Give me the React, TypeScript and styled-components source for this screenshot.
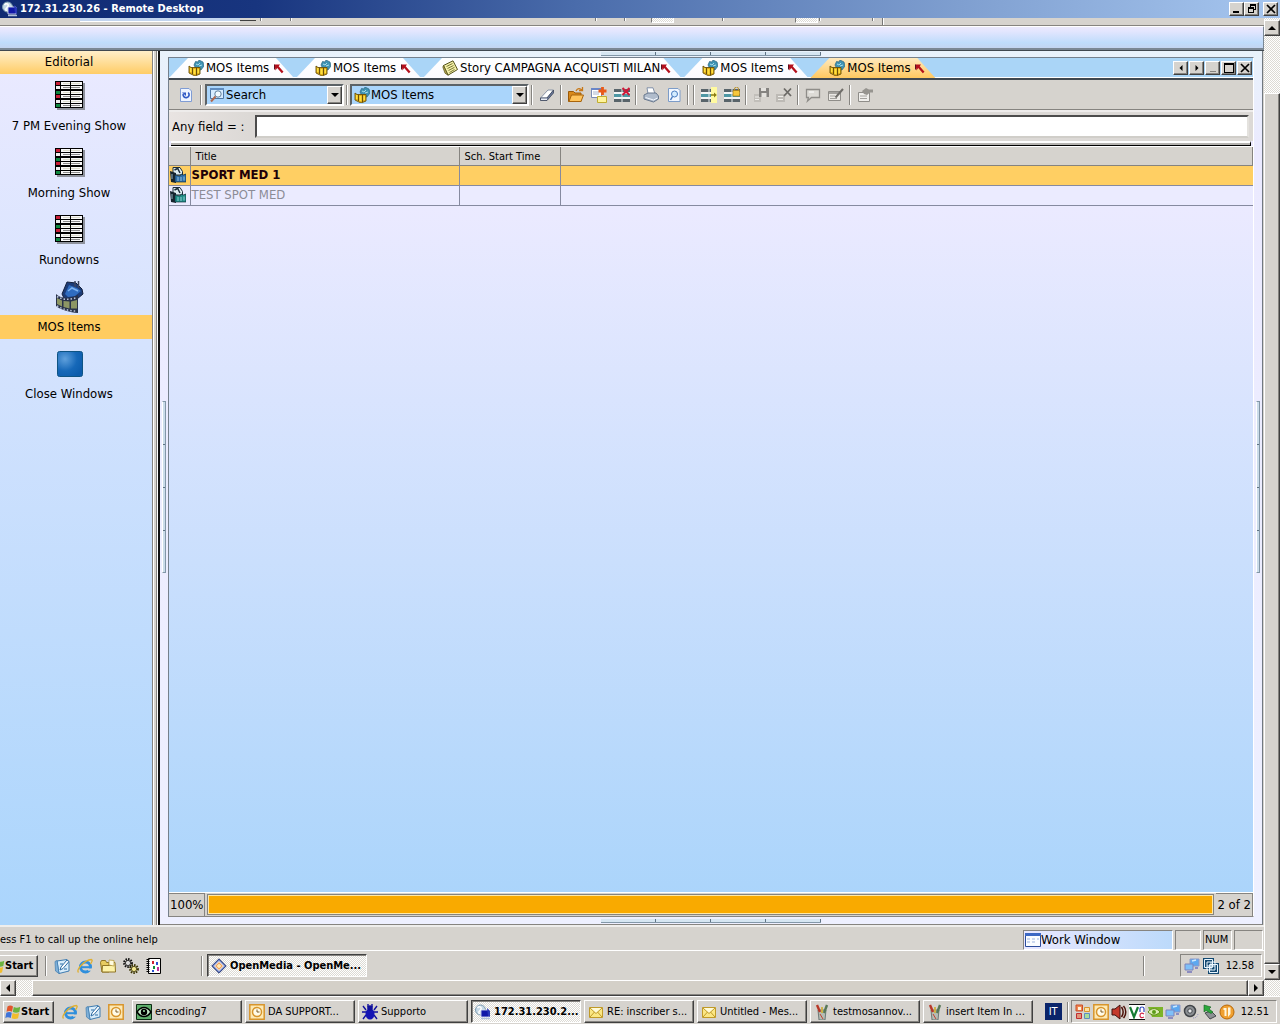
import React from "react";
import styled, { createGlobalStyle, css } from "styled-components";

const face = "#d6d3ce";
const uiFont = '"DejaVu Sans Condensed", "DejaVu Sans", Verdana, sans-serif';

const GlobalStyle = createGlobalStyle`
  * { box-sizing: border-box; }
  html, body { margin: 0; background: ${face}; }
  button, input, select, table { font: inherit; color: inherit; }
  button { padding: 0; margin: 0; cursor: default; }
`;

const raised = css`
  border: 1px solid;
  border-color: #fff #404040 #404040 #fff;
  box-shadow: inset -1px -1px 0 #868480;
`;
const sunken = css`
  border: 1px solid;
  border-color: #868480 #fff #fff #868480;
`;
const dither = css`
  background: repeating-conic-gradient(#fff 0 25%, #dcdad4 0 50%) 0 0 / 2px 2px;
`;

/* ---------- frame ---------- */
const Screen = styled.div`
  display: flex;
  flex-direction: column;
  min-height: 100vh;
  overflow: hidden;
  background: ${face};
  font-family: ${uiFont};
  font-size: 11px;
  line-height: 14px;
  color: #000;
`;
const TitleBar = styled.header`
  display: flex;
  align-items: center;
  height: 18px;
  padding: 0 2px;
  gap: 2px;
  color: #fff;
  background: linear-gradient(90deg, #0f2a72 0%, #18357f 20%, #4a6cab 45%, #7f9fd0 75%, #a6c6ef 100%);
`;
const TitleText = styled.h1`
  flex: 1;
  margin: 0;
  font-size: 11px;
  font-weight: bold;
`;
const BoxButton = styled.button<{ $gap?: number }>`
  display: flex;
  align-items: center;
  justify-content: center;
  flex: none;
  width: 15px;
  height: 14px;
  margin-left: ${(p) => p.$gap ?? 0}px;
  background: ${face};
  ${raised}
`;
const WinButtons = styled.div`
  display: flex;
`;
const Desk = styled.div`
  display: flex;
  flex: 1;
`;
const Remote = styled.div`
  display: flex;
  flex-direction: column;
  flex: 1;
  min-width: 0;
`;
const VScroll = styled.div`
  display: flex;
  flex-direction: column;
  flex: none;
  width: 16px;
  padding-top: 2px;
  ${dither}
`;
const HScroll = styled.div`
  display: flex;
  height: 16px;
  padding-right: 16px;
  ${dither}
`;
const ScrollButton = styled.button`
  display: flex;
  align-items: center;
  justify-content: center;
  flex: none;
  width: 16px;
  height: 16px;
  background: ${face};
  ${raised}
`;
const VThumb = styled.div`
  flex: 1;
  margin-top: 57px;
  background: ${face};
  ${raised}
`;
const HThumb = styled.div`
  flex: 1;
  margin-left: 16px;
  background: #d4d0c8;
  ${raised}
`;

/* ---------- remote application ---------- */
const Remnant = styled.div`
  display: flex;
  height: 8px;
  border-bottom: 1px solid #868480;
  background: ${face};
`;
const RemnantField = styled.span`
  width: 160px;
  height: 4px;
  margin-left: 80px;
  border-bottom: 1px solid #fff;
  background: #c2d4ee;
`;
const RemnantDrop = styled.span`
  width: 16px;
  height: 3px;
  border-bottom: 1px solid #404040;
`;
const Tick = styled.span<{ $before: number; $tall?: boolean }>`
  width: 2px;
  height: ${(p) => (p.$tall ? 7 : 3)}px;
  margin-left: ${(p) => p.$before}px;
  border-left: 1px solid #777;
  border-right: 1px solid #fff;
`;
const Pressed = styled.span<{ $before: number }>`
  width: 23px;
  height: 5px;
  margin-left: ${(p) => p.$before}px;
  border: 1px solid #fff;
  border-left-color: #777;
  border-top: 0;
  ${dither}
`;
const BlueBar = styled.div`
  height: 24px;
  border-top: 1px solid #fff;
  border-bottom: 2px solid #7b8894;
  border-right: 1px solid #7b8894;
  background: linear-gradient(#ebe9fe 0, #e3e6fe 20%, #bfdcfb 75%, #c3d4f0 100%);
`;
const Work = styled.div`
  display: flex;
  flex: 1;
  min-height: 0;
  padding-right: 1px;
  border-top: 1px solid #404850;
`;
const Sidebar = styled.nav`
  flex: none;
  width: 153px;
  border-right: 1px solid #868480;
  background: linear-gradient(#ebeaff, #aad5fc);
  font-size: 13px;
  line-height: 16px;
`;
const SideTitle = styled.h2`
  height: 23px;
  margin: 0;
  padding: 3px 14px 0 0;
  font-size: 13px;
  font-weight: normal;
  text-align: center;
  background: linear-gradient(#ffefc9, #ffcc66);
`;
const SideItem = styled.button`
  display: block;
  width: 100%;
  height: 67px;
  padding: 6px 0 3px;
  border: 0;
  background: none;
  text-align: center;
`;
const SideIcon = styled.span`
  display: flex;
  height: 31px;
  margin-bottom: 3px;
  padding-right: 12px;
  align-items: center;
  justify-content: center;
`;
const SideLabel = styled.span<{ $on?: boolean }>`
  display: block;
  height: 24px;
  padding: 4px 14px 0 0;
  background: ${(p) => (p.$on ? "#ffcc60" : "none")};
`;
const Splitter = styled.div`
  flex: none;
  width: 7px;
  border-left: 1px solid #fff;
  border-right: 2px solid #111;
  background: linear-gradient(90deg, ${face} 2px, #868480 2px 3px, #fff 3px);
`;
const Frame = styled.main`
  display: grid;
  flex: 1;
  min-width: 0;
  grid-template: 6px minmax(0, 1fr) 7px / 8px minmax(0, 1fr) 8px;
  border-right: 1px solid #707880;
  border-bottom: 1px solid #868480;
  background: linear-gradient(#e9f2fb, #ebeaff 12%, #eef0ff);
`;
const HGrip = styled.div`
  grid-column: 1 / -1;
  justify-self: center;
  align-self: center;
  width: 220px;
  height: 4px;
  border-bottom: 1px solid #8297a8;
  background: repeating-linear-gradient(90deg, #d6e6f2 0 54px, #5f7384 54px 55px);
`;
const VGrip = styled.div`
  justify-self: center;
  align-self: center;
  width: 4px;
  height: 172px;
  border: 1px solid #8297a8;
  border-left-color: #fff;
  background: repeating-linear-gradient(#cbdcea 0 42px, #5f7384 42px 43px);
`;
const Child = styled.section`
  display: flex;
  flex-direction: column;
  min-width: 0;
  border: 1px solid #75808c;
  border-right-color: #fff;
  border-bottom-color: #868480;
  background: linear-gradient(#ebeaff 150px, #a9d4fb);
`;
const TabStrip = styled.div`
  display: flex;
  height: 22px;
  background: #aad5f7;
  border-bottom: 2px solid #404850;
`;
const Tabs = styled.div`
  display: flex;
  flex: 1;
  border-bottom: 1px solid #fff;
`;
const Tab = styled.button<{ $on?: boolean }>`
  display: flex;
  align-items: center;
  height: 20px;
  padding: 0 12px 0 19px;
  border: 0;
  font-size: 13px;
  line-height: 16px;
  white-space: nowrap;
  background: ${(p) => (p.$on ? "linear-gradient(#ffe9bd, #ffc860)" : "linear-gradient(#ffffff, #fbfbff)")};
  clip-path: polygon(19px 0, calc(100% - 20px) 0, calc(100% - 2px) 100%, 0 100%);
`;
const TabText = styled.span`
  min-width: 67px;
  margin: 0 1px 0 2px;
  text-align: left;
`;
const TabTools = styled.div`
  display: flex;
  align-items: center;
  gap: 1px;
  padding-right: 1px;
  border-bottom: 1px solid #fff;
`;
const Toolbar = styled.div`
  display: flex;
  align-items: center;
  height: 30px;
  padding-left: 5px;
  border-bottom: 1px solid #868480;
  background: ${face};
`;
const ToolButton = styled.button`
  display: flex;
  align-items: center;
  justify-content: center;
  flex: none;
  width: 23px;
  height: 22px;
  border: 0;
  background: none;
`;
const Sep = styled.span<{ $h?: number; $m?: number }>`
  flex: none;
  width: 2px;
  height: ${(p) => p.$h ?? 20}px;
  margin: 0 ${(p) => p.$m ?? 2}px;
  border-left: 1px solid #868480;
  border-right: 1px solid #fff;
`;
const Combo = styled.span<{ $w: number }>`
  display: flex;
  align-items: center;
  flex: none;
  width: ${(p) => p.$w}px;
  height: 22px;
  padding-left: 2px;
  border: 2px solid;
  border-color: #5c6266 #fff #fff #5c6266;
  background: #aad5fb;
  font-size: 13px;
`;
const ComboSelect = styled.select`
  appearance: none;
  flex: 1;
  min-width: 0;
  height: 18px;
  margin-right: -15px;
  padding: 0 16px 0 1px;
  border: 0;
  outline: 0;
  background: transparent;
`;
const ComboArrow = styled.span`
  display: flex;
  align-items: center;
  justify-content: center;
  flex: none;
  width: 15px;
  height: 18px;
  background: ${face};
  pointer-events: none;
  ${raised}
`;
const FieldRow = styled.div`
  display: flex;
  align-items: center;
  height: 31px;
  padding: 0 4px 0 3px;
  gap: 11px;
  border-top: 2px solid #eeeceb;
  background: linear-gradient(90deg, #e9e4e2, #dcd9d6 80px);
  font-size: 13px;
`;
const FieldInput = styled.input`
  flex: 1;
  min-width: 0;
  height: 23px;
  padding: 0 4px;
  border: 2px solid;
  border-color: #4c4c4c #e4e2de #d0cec9 #4c4c4c;
  outline: 0;
  background: #fff;
`;
const Divider = styled.div`
  height: 5px;
  margin: 0 2px;
  border-top: 2px solid #fff;
  border-bottom: 1px solid #000;
  border-right: 1px solid #000;
  background: #b5b3b0;
`;
const Sheet = styled.div`
  display: flex;
  flex: 1;
  flex-direction: column;
  border-top: 1px solid #fff;
`;
const Grid = styled.table`
  width: 100%;
  border-collapse: collapse;
  table-layout: fixed;
`;
const HeadCell = styled.th`
  height: 18px;
  padding: 2px 0 0 5px;
  border-right: 1px solid #868480;
  border-bottom: 1px solid #868480;
  background: ${face};
  font-weight: normal;
  text-align: left;
`;
const Row = styled.tr<{ $on?: boolean }>`
  background: ${(p) => (p.$on ? "#ffcf63" : "#ebebff")};
  color: ${(p) => (p.$on ? "#200008" : "#8c8c96")};
  font-size: 13px;
  line-height: 16px;
  font-weight: ${(p) => (p.$on ? "bold" : "normal")};
`;
const Cell = styled.td`
  height: 20px;
  padding: 0 0 0 1px;
  border-right: 1px solid #868aa0;
  border-bottom: 1px solid #868aa0;
  &:last-child { border-right: 0; }
  svg { display: block; }
`;
const Footer = styled.div`
  display: flex;
  height: 24px;
  border-top: 1px solid #fff;
  background: ${face};
  font-size: 13px;
  line-height: 16px;
`;
const FooterText = styled.span`
  padding: 3px 1px 0;
  border-top: 1px solid #868480;
  border-right: 1px solid #868480;
`;
const Progress = styled.progress`
  appearance: none;
  flex: 1;
  min-width: 0;
  height: 21px;
  margin: 1px 2px 0;
  border: 1px solid #868480;
  background: #ffe080;
  &::-webkit-progress-bar { background: #ffe9a8; padding: 1px; }
  &::-webkit-progress-value { background: #f9aa00; }
`;
const StatusBar = styled.footer`
  display: flex;
  align-items: center;
  height: 26px;
  padding: 3px 1px 1px 0;
  gap: 2px;
  border-top: 2px solid #efeeec;
  border-bottom: 1px solid #fff;
  white-space: nowrap;
`;
const StatusText = styled.span`
  flex: 1;
`;
const StatusCell = styled.span<{ $w: number; $blue?: boolean }>`
  display: flex;
  align-items: center;
  flex: none;
  width: ${(p) => p.$w}px;
  height: 20px;
  padding-left: 1px;
  ${sunken}
  ${(p) =>
    p.$blue &&
    css`
      font-size: 13px;
      background: linear-gradient(90deg, #e9e8ff, #bcdafb);
    `}
`;

/* ---------- taskbars ---------- */
const RemoteBar = styled.div`
  display: flex;
  align-items: center;
  height: 29px;
  padding-right: 2px;
  overflow: hidden;
`;
const LocalBar = styled.div`
  display: flex;
  align-items: center;
  height: 28px;
  padding: 2px 3px 0;
  border-top: 1px solid #fff;
  box-shadow: inset 0 1px 0 ${face};
`;
const StartButton = styled.button<{ $cut?: boolean }>`
  display: flex;
  align-items: center;
  flex: none;
  width: 51px;
  height: 22px;
  margin-left: ${(p) => (p.$cut ? -13 : 0)}px;
  padding: 0 1px;
  background: ${face};
  font-weight: bold;
  ${raised}
`;
const Quick = styled.div<{ $left: number; $right: number }>`
  display: flex;
  flex: none;
  gap: 7px;
  padding: 0 ${(p) => p.$right}px 0 ${(p) => p.$left}px;
`;
const QuickButton = styled.button`
  display: flex;
  width: 16px;
  height: 16px;
  border: 0;
  background: none;
`;
const Tasks = styled.div`
  display: flex;
  flex: 1;
  min-width: 0;
  gap: 3px;
`;
const Task = styled.button<{ $on?: boolean; $w?: number }>`
  display: flex;
  align-items: center;
  flex: 0 1 ${(p) => p.$w ?? 110}px;
  min-width: 0;
  height: 23px;
  padding: 0 3px;
  gap: 3px;
  background: ${face};
  white-space: nowrap;
  ${raised}
  ${(p) =>
    p.$on &&
    css`
      ${dither}
      border-color: #404040 #fff #fff #404040;
      box-shadow: inset 1px 1px 0 #868480;
      font-weight: bold;
    `}
  svg { flex: none; }
`;
const Lang = styled.span`
  flex: none;
  width: 17px;
  height: 17px;
  margin-right: 3px;
  line-height: 17px;
  text-align: center;
  color: #fff;
  background: #0a246a;
`;
const Tray = styled.div<{ $gap: number }>`
  display: flex;
  align-items: center;
  flex: none;
  height: 23px;
  padding: 0 7px 0 3px;
  gap: ${(p) => p.$gap}px;
  ${sunken}
`;
const Clock = styled.time`
  margin-left: 4px;
`;

/* ---------- icons ---------- */
const Svg = ({ s = 16, children }: { s?: number; children: React.ReactNode }) => (
  <svg width={s} height={s} viewBox="0 0 16 16" aria-hidden="true">
    {children}
  </svg>
);

const Arrow = ({ d, small }: { d: "up" | "down" | "left" | "right"; small?: boolean }) => {
  const path = {
    up: "M0 6L4 2L8 6Z",
    down: "M0 2L4 6L8 2Z",
    left: "M6 0L2 4L6 8Z",
    right: "M2 0L6 4L2 8Z",
  }[d];
  const size = small ? 6 : 8;
  return (
    <svg width={size} height={size} viewBox="0 0 8 8" aria-hidden="true">
      <path d={path} fill="#000" />
    </svg>
  );
};
const Glyph = ({ k }: { k: "min" | "dimmin" | "max" | "restore" | "close" }) => (
  <svg width="10" height="10" viewBox="0 0 10 10" aria-hidden="true" shapeRendering="crispEdges">
    {k === "min" && <path d="M1 7h6v2H1z" />}
    {k === "dimmin" && <path d="M2 8h6v1H2z" fill="#868480" />}
    {k === "max" && <path d="M0 0h10v10H0zM1 2v7h8V2z" fillRule="evenodd" />}
    {k === "restore" && (
      <path d="M3 0h6v6H7V5h1V2H4v1H3zM1 3h6v6H1zM2 5v3h4V5z" fillRule="evenodd" />
    )}
    {k === "close" && (
      <path d="M1 1L9 9M9 1L1 9" stroke="#000" strokeWidth="1.7" shapeRendering="auto" />
    )}
  </svg>
);
const RdpIcon = () => (
  <Svg>
    <circle cx="5.500" cy="6" r="5" fill="#c4d8e6" stroke="#7d9bb0" />
    <path d="M2.500 4c2-3 5 0 3 2s-2 2-1 4" fill="none" stroke="#fff" strokeWidth="1.500" />
    <path d="M6 6h8v7H6z" fill="#1018a8" stroke="#dfe6f5" strokeWidth=".8" />
    <path d="M6 14.500h9" stroke="#aebfd8" strokeWidth="1.500" />
    <path d="M12 4l3 3v6l-2-1z" fill="#2838b8" />
  </Svg>
);
const MosIcon = () => (
  <Svg>
    <path d="M6 5l1.500-3.500L10 2l1-2 4 2 1 4-3 4-5-1z" fill="#3f93b4" stroke="#2b6480" strokeWidth=".7" />
    <path d="M8 4l2 1 2-2M11 6l3-1" stroke="#a6dcea" fill="none" />
    <path d="M1 6l2 1.500h9L12 14l-5 2-6-3z" fill="#e0ae18" stroke="#6a5008" strokeWidth=".9" />
    <path d="M4.500 8v6M8.500 8v7" stroke="#6a5008" />
    <path d="M2 8h1.500v4H2zM5.500 9h2v5h-2zM9.500 9H11v4H9.500z" fill="#ffe040" />
  </Svg>
);
const StoryIcon = () => (
  <Svg>
    <path d="M1.500 5.500L11 .8L15.500 9.500L6 15.200z" fill="#f4f0a8" stroke="#53521c" />
    <path d="M1.500 5.500L6 15.200l-3-2L.8 7z" fill="#b9a850" stroke="#53521c" strokeWidth=".7" />
    <path d="M4.500 6.500l6-3M5.500 8.500l6-3M6.500 10.500l6-3.200M7.500 12.500l5-3" stroke="#6b6a2a" strokeWidth=".9" />
  </Svg>
);
const PinIcon = () => (
  <svg width="10" height="11" viewBox="0 0 10 11" aria-hidden="true">
    <path d="M.5 1.500h5.500L4.700 3.200L9.500 8.800L7.800 10.300L3.200 5L1.500 7.500z" fill="#b4101c" />
    <path d="M.5 1.500v5" stroke="#5c1020" />
  </svg>
);
const RefreshIcon = () => (
  <Svg>
    <path d="M2.500 1.500h8.500l2.500 2.500v10.500h-11z" fill="#eef4ff" stroke="#7f9cd4" />
    <path d="M5.200 7a3 3 0 1 0 5 -1.500" fill="none" stroke="#2f58c4" strokeWidth="1.700" />
    <path d="M4 5.500h4V9z" fill="#2f58c4" />
  </Svg>
);
const SearchIcon = () => (
  <Svg>
    <path d="M1.500 1.500h13v10h-13z" fill="#d6ecff" stroke="#4f78a4" />
    <path d="M1 1h14v2H1z" fill="#5f8cc0" />
    <circle cx="9" cy="7" r="3.200" fill="#f2fbff" stroke="#5f7f9c" />
    <path d="M6.500 9.500L2 14.500" stroke="#b06a50" strokeWidth="2" />
  </Svg>
);
const EraserIcon = () => (
  <Svg>
    <path d="M1.500 11L9 3h5.500L8 11z" fill="#fff" stroke="#8a94a6" />
    <path d="M1.500 11v2.500H8L14.500 6V3L8 11z" fill="#6c7a9a" stroke="#3c465c" strokeWidth=".8" />
    <path d="M2 11.500h6v1.500H2z" fill="#e8ecf4" />
  </Svg>
);
const FolderIcon = () => (
  <Svg>
    <path d="M.5 4.500h5L7 6h6v8.500H.5z" fill="#d98a1c" stroke="#9c5a08" />
    <path d="M1 14.500L3.500 8h12L13 14.500z" fill="#ffc45c" stroke="#a8640c" />
    <path d="M8 4c1.500-3 4-3 6-1M14.500 0v3.500H11" fill="none" stroke="#c87818" strokeWidth="1.300" />
  </Svg>
);
const NewItemIcon = () => (
  <Svg>
    <path d="M.5 1.500h10v9H.5z" fill="#fff" stroke="#7c8cb4" />
    <path d="M0 1h11v2H0z" fill="#6a86c8" />
    <path d="M2 5h6M2 7h6" stroke="#a8b4cc" />
    <path d="M6.500 9.500h9v6h-9z" fill="#fff49a" stroke="#c0ac30" />
    <path d="M11.500 0v8M7.500 4h8" stroke="#ea5a18" strokeWidth="2.800" />
  </Svg>
);
const GridBase = () => (
  <>
    <path d="M0 2h16v13H0z" fill="#f4f6f6" />
    <path d="M0 2h16v3H0zM0 12h16v3H0z" fill="#59646a" />
    <path d="M0 7h16v3H0z" fill="#4f98a4" />
    <path d="M8 2v13" stroke="#e8eeee" />
  </>
);
const DeleteRowIcon = () => (
  <Svg>
    <GridBase />
    <path d="M8.500 1l7 7M15.500 1l-7 7" stroke="#d01838" strokeWidth="2" />
  </Svg>
);
const LockRowIcon = () => (
  <Svg>
    <GridBase />
    <path d="M10.500 4V2a2 2 0 0 1 4 0v2" fill="none" stroke="#b8902c" />
    <path d="M9 3.500h6.500V9H9z" fill="#f6c83c" stroke="#a87c10" strokeWidth=".7" />
  </Svg>
);
const InsertRowIcon = () => (
  <Svg>
    <GridBase />
    <path d="M10 0h6v16h-6z" fill="#fffaa0" />
    <path d="M10 8h4" stroke="#8a7c10" strokeWidth="1.500" />
    <path d="M13 5.500L15.800 8L13 10.500z" fill="#8a7c10" />
  </Svg>
);
const PrintIcon = () => (
  <Svg>
    <path d="M4 .8h6l2 6H5z" fill="#fff" stroke="#8090a8" />
    <path d="M1 8l4-2h8l2.500 3v3l-5 3L1 12z" fill="#b0bccc" stroke="#68788e" />
    <path d="M2.500 10.500l8 2.500 4-2" fill="none" stroke="#f4f8ff" />
  </Svg>
);
const PreviewIcon = () => (
  <Svg>
    <path d="M2.500 1.500h9.500l2 2v11H2.500z" fill="#f2f7ff" stroke="#7c9cc8" />
    <circle cx="8.500" cy="7" r="3" fill="#d4ecff" stroke="#4a7cc0" />
    <path d="M6.500 9.500L4.500 13" stroke="#4a7cc0" strokeWidth="1.500" />
  </Svg>
);
const SaveOffIcon = () => (
  <Svg>
    <path d="M1 7h7v8H1z" fill="#c2bfba" />
    <path d="M6 1h10v9H6z" fill="#858380" />
    <path d="M8 1h5v3H8zM8.500 6h5v4h-5z" fill="#e4e2de" />
    <path d="M2 10h4M2 12.500h4" stroke="#f0efec" />
  </Svg>
);
const RemoveOffIcon = () => (
  <Svg>
    <path d="M0 7h9v8H0z" fill="#bdbab5" />
    <path d="M2 9.500h5M2 12.500h5" stroke="#efeeea" />
    <path d="M8 1.500l7 7.500M15 1.500L8 9" stroke="#6b6965" strokeWidth="1.800" />
  </Svg>
);
const BubbleOffIcon = () => (
  <Svg>
    <path d="M1.500 2.500h13v8H6.500L2.500 14l1-3.500h-2z" fill="#dddbd6" stroke="#8f8d89" strokeWidth="1.300" />
    <path d="M4 5h5" stroke="#fff" />
  </Svg>
);
const EditOffIcon = () => (
  <Svg>
    <path d="M.5 4.500h12v9H.5z" fill="#eceae6" stroke="#8f8d89" />
    <path d="M1 5h11v2H1z" fill="#a4a29e" />
    <path d="M2 9h5M2 11.500h7" stroke="#a4a29e" />
    <path d="M7.500 10.500L15 2" stroke="#6f6d69" strokeWidth="2" />
  </Svg>
);
const PropsOffIcon = () => (
  <Svg>
    <path d="M1.500 5.500h11v9h-11z" fill="#f0efec" stroke="#8f8d89" />
    <path d="M3 9h7M3 11.500h7" stroke="#a4a29e" />
    <path d="M5 4l4-3 3 1.500h4v3h-3L10 8l-3-1z" fill="#96948f" />
  </Svg>
);
const CamIcon = ({ c }: { c: string }) => (
  <Svg>
    <path d="M3 .5h7l2.500 4V8H3z" fill="#dfeef2" stroke="#1d2c38" />
    <path d="M4.500 3l4-2M8 2l2 4" stroke="#1d2c38" strokeWidth="1.500" />
    <path d="M0 4l6 2v10l-5-1z" fill="#16242e" />
    <path d="M5 8l5 1 1-2 2 1 3-1v8H5z" fill={c} stroke="#16303c" strokeWidth=".7" />
    <path d="M2 7v5M8 10v4M11 10v4M14 9.500v4" stroke="#b4dcea" strokeWidth=".8" />
  </Svg>
);
const RundownIcon = () => (
  <svg width="30" height="29" viewBox="0 0 30 29" aria-hidden="true" shapeRendering="crispEdges">
    <path d="M28 2h2v27H2v-2h26z" fill="#8e929c" />
    <path d="M0 0h28v27H0z" fill="#000" />
    {["#c82038", "#f0f0f0", "#108840", "#c82038", "#f0f0f0", "#108840"].map((c, i) => {
      const y = 1 + Math.round(i * 4.4);
      return (
        <g key={i}>
          <path d={`M1 ${y}h4v3H1z`} fill={c} />
          <path d={`M6 ${y}h9v3H6zM16 ${y}h11v3H16z`} fill="#f8f8f8" />
          <path d={`M8 ${y + 1}h7v1H8zM16 ${y + 1}h9v1H16z`} fill={i % 2 ? "#8c8c8c" : "#dcdccc"} />
        </g>
      );
    })}
  </svg>
);
const FilmIcon = () => (
  <svg width="30" height="32" viewBox="0 0 30 32" aria-hidden="true">
    <path d="M7 13L12 1l9 1 6 6 1 5-6 5-12 1z" fill="#1c3c78" stroke="#14203c" />
    <path d="M10 13l4-9 8 3 4 3-6 5-7 1z" fill="#2f6cc0" />
    <path d="M13 10l4-3 6 3" fill="none" stroke="#7fb4f0" strokeWidth="1.500" />
    <path d="M20 0v6M23.500 0v7" stroke="#3c4660" strokeWidth="1.500" />
    <path d="M1 13c2 2 4 3 7 3.500c6 1 11-.5 15-2.500v18c-8-.5-17-3-22-7z" fill="#28324a" />
    <path d="M2 17l5 2.500v6L2 23zM8.500 20l6 .5v7l-6-1.500zM16 20.500l6-1.500v8.500h-6z" fill="#8c9664" />
    <path d="M2 15.500c6 3.500 13 3.500 20 1M2 25c6 3.500 13 5 20 5" fill="none" stroke="#b9c4dc" strokeWidth="1.500" strokeDasharray="1.500 2" />
  </svg>
);
const BlueSquareIcon = () => (
  <svg width="28" height="28" viewBox="0 0 28 28" aria-hidden="true">
    <defs>
      <radialGradient id="sq" cx=".3" cy=".3" r=".8">
        <stop offset="0" stopColor="#5fa0dc" />
        <stop offset=".6" stopColor="#1668b8" />
        <stop offset="1" stopColor="#0c5cac" />
      </radialGradient>
    </defs>
    <rect x="1.500" y="1.500" width="25" height="25" rx="2" fill="url(#sq)" stroke="#0e5484" />
  </svg>
);
const WindowIcon = () => (
  <Svg>
    <path d="M.5 1.500h15v13H.5z" fill="#fafcff" stroke="#2c4c9c" />
    <path d="M0 1h16v3H0z" fill="#3c68c4" />
    <path d="M2 7h3M7 7h3M2 10h3M7 10h3M12 7h2" stroke="#9db4e0" />
  </Svg>
);
const FlagIcon = () => (
  <Svg>
    <path d="M2.500 2.500c2-1.500 4-1 5.500 0L7 7.700C5.500 6.700 3.500 6.700 1.500 7.700z" fill="#e2552c" />
    <path d="M8.800 3c2 1 4 1 6.500-.3l-1 5.300c-2 1-4.500 1-6.500 0z" fill="#6cb33e" />
    <path d="M1.300 8.700c2-1 4-1 5.500 0l-1 5.300c-2-1-4-1-5.500 0z" fill="#3f74d8" />
    <path d="M7.600 9c2 1 4.500 1 6.500 0l-1 5.300c-2 1-4.500 1-6.500 0z" fill="#f2bd2c" />
  </Svg>
);
const DeskIcon = () => (
  <Svg>
    <path d="M3 3l10-1.500L15 4v9l-10 2.500z" fill="#d8ecfa" stroke="#3f7cb0" />
    <path d="M1 3.500l2-1 2 13L1.500 13z" fill="#7fb0d8" stroke="#3f7cb0" strokeWidth=".7" />
    <path d="M6 12l1-3 6-7 2 1.500-6 7z" fill="#fff" stroke="#2f6ca4" />
    <path d="M6 6h3M10 11h3" stroke="#2f6ca4" />
  </Svg>
);
const IeIcon = () => (
  <Svg>
    <circle cx="8.500" cy="9" r="5" fill="none" stroke="#2f8fdc" strokeWidth="3" />
    <path d="M5 9.200h8" stroke="#2f8fdc" strokeWidth="2" />
    <path d="M11 10.500h5v2.200h-5z" fill={face} />
    <path d="M1.500 14.500C-1 12 7 2 14.500 1.500c1.500.5 0 3-1 4.500" fill="none" stroke="#e0b030" strokeWidth="1.300" />
  </Svg>
);
const OutlookIcon = () => (
  <Svg>
    <path d="M.8.8h14.400v14.400H.8z" fill="#fde9b4" stroke="#d8952c" strokeWidth="1.500" />
    <circle cx="8" cy="8" r="4.500" fill="#fffbe8" stroke="#d8952c" strokeWidth="1.500" />
    <path d="M8 5.500V8h2.500" fill="none" stroke="#7a5a28" />
  </Svg>
);
const YellowFolderIcon = () => (
  <Svg>
    <path d="M.5 4.500l1-2h4l1 2h2.500V14H2z" fill="#e8cc60" stroke="#8f7424" />
    <path d="M2.500 7.500h9l1-3h2.500l.500 9.500H2z" fill="#fdf2a8" stroke="#8f7424" />
    <path d="M9 2l5 .5V8l-5-1z" fill="#fffbe0" stroke="#b89c40" strokeWidth=".8" />
  </Svg>
);
const GearsIcon = () => (
  <Svg>
    <circle cx="5" cy="5" r="3.800" fill="none" stroke="#111" strokeWidth="2.200" strokeDasharray="1.500 1" />
    <circle cx="5" cy="5" r="2.600" fill="#ddd" stroke="#111" strokeWidth=".8" />
    <circle cx="11" cy="11" r="3.800" fill="none" stroke="#3a3400" strokeWidth="2.200" strokeDasharray="1.500 1" />
    <circle cx="11" cy="11" r="2.600" fill="#f4e890" stroke="#3a3400" strokeWidth=".8" />
  </Svg>
);
const NotebookIcon = () => (
  <Svg>
    <path d="M2.500.5h12v15h-12z" fill="#fff" stroke="#000" />
    <path d="M2 1v14" stroke="#000" strokeWidth="3" strokeDasharray="1 1" />
    <path d="M6 3h2v3H6z" fill="#d02030" />
    <path d="M10 4h2v3h-2zM6 12h2v2H6z" fill="#2850d0" />
    <path d="M7 8h2v3H7z" fill="#109040" />
    <path d="M11 9h2v4h-2z" fill="#c030a0" />
  </Svg>
);
const MediaIcon = () => (
  <Svg>
    <path d="M8 .8L15.200 8L8 15.200L.8 8z" fill="#6f86c8" stroke="#2c3c78" />
    <path d="M8 3.500L12.500 8L8 12.500L3.500 8z" fill="#f4a45c" stroke="#fff" />
    <path d="M8 6v4M6 8h4" stroke="#fff2c0" strokeWidth="1.500" />
  </Svg>
);
const EyeIcon = () => (
  <Svg>
    <path d="M.5.5h15v15H.5z" fill="#5fae6c" stroke="#0c2c14" />
    <path d="M1 8c4-6 10-6 14 0-4 6-10 6-14 0z" fill="#c4ecc8" stroke="#000" strokeWidth="1.500" />
    <circle cx="8" cy="8" r="3.200" fill="#000" />
    <circle cx="8" cy="7" r="1" fill="#9fe0a8" />
  </Svg>
);
const BugIcon = () => (
  <Svg>
    <path d="M1 2l3 4M15 2l-3 4M0 8h16M1 15l3-4M15 15l-3-4M6 0v3M10 0v3" stroke="#10109c" strokeWidth="1.400" />
    <ellipse cx="8" cy="10" rx="4.500" ry="5.500" fill="#1414b4" />
    <circle cx="8" cy="4" r="2.800" fill="#10109c" />
  </Svg>
);
const MailIcon = () => (
  <Svg>
    <path d="M1.500 3.500h13v10h-13z" fill="#fbe784" stroke="#c09a28" />
    <path d="M2 4h12L8 9.500z" fill="#fffbd8" />
    <path d="M2 4l6 5.500L14 4M2 13l4.500-5M14 13L9.500 8" fill="none" stroke="#c09a28" />
  </Svg>
);
const PencilsIcon = () => (
  <Svg>
    <path d="M4 6h8l-1 10H5z" fill="#b4bcb4" stroke="#566" strokeWidth=".8" />
    <path d="M3 1l3 7" stroke="#b83828" strokeWidth="2.400" />
    <path d="M8 3v6" stroke="#d0b040" strokeWidth="1.800" />
    <path d="M13 1l-3 8" stroke="#587858" strokeWidth="2.400" />
    <path d="M6 10l3 5" stroke="#c04030" />
  </Svg>
);
const NetIcon = () => (
  <Svg>
    <path d="M6 1h9v7H6z" fill="#5ca8f0" stroke="#8c98c8" />
    <path d="M8 3l4-1" stroke="#cfeaff" strokeWidth="1.500" />
    <path d="M1 6h8v6H1z" fill="#7fc0f8" stroke="#7c84bc" />
    <path d="M3 14h5M11 10h3" stroke="#8c8cc0" strokeWidth="2" />
  </Svg>
);
const VmIcon = () => (
  <Svg>
    <path d="M0 0h11v5h5v11H5v-5H0z" fill="#124870" />
    <path d="M1.500 1.500h8v8h-8zM6.500 6.500h8v8h-8zM4 4h8v8H4zM8 4v8M4 8h8" fill="none" stroke="#eaf6ff" />
  </Svg>
);
const OfficeIcon = () => (
  <Svg>
    <path d="M1 1h6.500v6H1z" fill="#f08850" stroke="#c84c28" />
    <path d="M3 3h3v3H3z" fill="#fff0d8" />
    <path d="M9.500 3.500h5v4h-5z" fill="#fde0a0" stroke="#d8952c" />
    <path d="M1.500 9.500h5v5h-5z" fill="#e09478" stroke="#c02c30" />
    <path d="M9.500 9.500h5v5h-5z" fill="#a8dc98" stroke="#5c8cc0" />
  </Svg>
);
const SoundIcon = () => (
  <Svg>
    <path d="M1 5h3l5-4v14l-5-4H1z" fill="#c43a2c" stroke="#3c100c" />
    <path d="M10.500 3c2 3 2 7 0 10M12.500 2c3 3 3 9 0 12" fill="none" stroke="#4c1008" strokeWidth="1.500" />
  </Svg>
);
const VncIcon = () => (
  <Svg>
    <path d="M0 1h16v14H0z" fill="#fff" />
    <path d="M0 .5h16M0 15.500h16" stroke="#111" />
    <path d="M1 3l4 10L9 3" fill="none" stroke="#167c34" strokeWidth="2.200" />
    <path d="M11 8V4.500c0-2 4-2 4 0V8" fill="none" stroke="#3048c0" strokeWidth="1.200" />
    <path d="M15 10c-3-2-4 0-4 1.500s1 3 4 1.500" fill="none" stroke="#d02848" strokeWidth="1.200" />
  </Svg>
);
const NvIcon = () => (
  <Svg>
    <path d="M1 3h15v10H5z" fill="#7cb428" />
    <path d="M1 8c4-5 9-4 12 0-4 4-8 4-12 0z" fill="#dcedb4" stroke="#5c8c18" />
    <circle cx="7" cy="8" r="2" fill="#5c9c18" />
  </Svg>
);
const SpeakerIcon = () => (
  <Svg>
    <circle cx="7" cy="7" r="5.500" fill="#8c9094" stroke="#404448" strokeWidth="1.500" />
    <circle cx="7" cy="7" r="2.200" fill="#e8eaec" stroke="#404448" />
    <path d="M10 14c3 0 4-1 5-4" fill="none" stroke="#9898c0" strokeDasharray="1 1" />
  </Svg>
);
const UsbIcon = () => (
  <Svg>
    <path d="M4 9l6-2 5 5-6 3z" fill="#8c9094" stroke="#44484c" />
    <path d="M3 1l7 2-2 2 4 3-2 1.500-5-3L3 8z" fill="#2ca83c" stroke="#10601c" strokeWidth=".6" />
  </Svg>
);
const PauseBallIcon = () => (
  <Svg>
    <circle cx="8" cy="8" r="7" fill="#f0a030" stroke="#b86808" />
    <path d="M4.500 4h3v8h-2V6h-1zM9 3.500h2.500V10L9 13z" fill="#fff6dc" />
  </Svg>
);

/* ---------- data ---------- */
const tabs = [
  { text: "MOS Items", Icon: MosIcon },
  { text: "MOS Items", Icon: MosIcon },
  { text: "Story CAMPAGNA ACQUISTI MILAN", Icon: StoryIcon },
  { text: "MOS Items", Icon: MosIcon },
  { text: "MOS Items", Icon: MosIcon },
];
const sideItems = [
  { text: "7 PM Evening Show", Icon: RundownIcon },
  { text: "Morning Show", Icon: RundownIcon },
  { text: "Rundowns", Icon: RundownIcon },
  { text: "MOS Items", Icon: FilmIcon },
  { text: "Close Windows", Icon: BlueSquareIcon },
];
type Tool = { name: string; Icon: () => React.ReactElement };
const toolGroups: Tool[][] = [
  [{ name: "Clear", Icon: EraserIcon }],
  [
    { name: "Open", Icon: FolderIcon },
    { name: "New item", Icon: NewItemIcon },
    { name: "Delete item", Icon: DeleteRowIcon },
  ],
  [
    { name: "Print", Icon: PrintIcon },
    { name: "Preview", Icon: PreviewIcon },
  ],
  [],
  [
    { name: "Insert row", Icon: InsertRowIcon },
    { name: "Lock row", Icon: LockRowIcon },
  ],
  [
    { name: "Save", Icon: SaveOffIcon },
    { name: "Remove", Icon: RemoveOffIcon },
  ],
  [
    { name: "Comment", Icon: BubbleOffIcon },
    { name: "Edit", Icon: EditOffIcon },
  ],
  [{ name: "Properties", Icon: PropsOffIcon }],
];
const tasks = [
  { text: "encoding7", Icon: EyeIcon },
  { text: "DA SUPPORT...", Icon: OutlookIcon },
  { text: "Supporto", Icon: BugIcon },
  { text: "172.31.230.2...", Icon: RdpIcon },
  { text: "RE: inscriber s...", Icon: MailIcon },
  { text: "Untitled - Mes...", Icon: MailIcon },
  { text: "testmosannov...", Icon: PencilsIcon },
  { text: "insert Item In ...", Icon: PencilsIcon },
];

const ComboBox = ({ label, value, width, Icon }: { label: string; value: string; width: number; Icon: () => React.ReactElement }) => (
  <Combo $w={width}>
    <Icon />
    <ComboSelect aria-label={label} defaultValue={value}>
      <option>{value}</option>
    </ComboSelect>
    <ComboArrow>
      <Arrow d="down" />
    </ComboArrow>
  </Combo>
);

export default function App() {
  return (
    <Screen>
      <GlobalStyle />
      <TitleBar>
        <RdpIcon />
        <TitleText>172.31.230.26 - Remote Desktop</TitleText>
        <WinButtons>
          <BoxButton aria-label="Minimize"><Glyph k="min" /></BoxButton>
          <BoxButton aria-label="Restore"><Glyph k="restore" /></BoxButton>
          <BoxButton aria-label="Close" $gap={4}><Glyph k="close" /></BoxButton>
        </WinButtons>
      </TitleBar>

      <Desk>
        <Remote>
          <Remnant>
            <RemnantField />
            <RemnantDrop />
            <Tick $before={4} />
            <Tick $before={28} />
            <Tick $before={303} />
            <Tick $before={27} />
            <Pressed $before={25} />
            <Tick $before={48} />
            <Pressed $before={71} />
            <Tick $before={1} />
            <Tick $before={51} />
            <Tick $before={8} $tall />
          </Remnant>
          <BlueBar />
          <Work>
            <Sidebar>
              <SideTitle>Editorial</SideTitle>
              {sideItems.map(({ text, Icon }) => (
                <SideItem key={text}>
                  <SideIcon><Icon /></SideIcon>
                  <SideLabel $on={text === "MOS Items"}>{text}</SideLabel>
                </SideItem>
              ))}
            </Sidebar>
            <Splitter />
            <Frame>
              <HGrip />
              <VGrip />
              <Child>
                <TabStrip>
                  <Tabs>
                    {tabs.map(({ text, Icon }, i) => (
                      <Tab key={i} $on={i === 4}>
                        <Icon />
                        <TabText>{text}</TabText>
                        <PinIcon />
                      </Tab>
                    ))}
                  </Tabs>
                  <TabTools>
                    <BoxButton aria-label="Previous tab"><Arrow d="left" small /></BoxButton>
                    <BoxButton aria-label="Next tab"><Arrow d="right" small /></BoxButton>
                    <BoxButton aria-label="Minimize view"><Glyph k="dimmin" /></BoxButton>
                    <BoxButton aria-label="Maximize view"><Glyph k="max" /></BoxButton>
                    <BoxButton aria-label="Close view"><Glyph k="close" /></BoxButton>
                  </TabTools>
                </TabStrip>
                <Toolbar>
                  <ToolButton aria-label="Refresh"><RefreshIcon /></ToolButton>
                  <Sep $m={3} />
                  <ComboBox label="Mode" value="Search" width={139} Icon={SearchIcon} />
                  <Sep />
                  <ComboBox label="Type" value="MOS Items" width={179} Icon={MosIcon} />
                  {toolGroups.map((group, i) => (
                    <React.Fragment key={i}>
                      <Sep />
                      {group.map(({ name, Icon }) => (
                        <ToolButton key={name} aria-label={name}><Icon /></ToolButton>
                      ))}
                    </React.Fragment>
                  ))}
                </Toolbar>
                <FieldRow>
                  <label htmlFor="any">Any field = :</label>
                  <FieldInput id="any" />
                </FieldRow>
                <Divider />
                <Sheet>
                  <Grid>
                    <colgroup>
                      <col style={{ width: 21 }} />
                      <col style={{ width: 269 }} />
                      <col style={{ width: 101 }} />
                      <col />
                    </colgroup>
                    <thead>
                      <tr>
                        <HeadCell />
                        <HeadCell>Title</HeadCell>
                        <HeadCell>Sch. Start Time</HeadCell>
                        <HeadCell />
                      </tr>
                    </thead>
                    <tbody>
                      <Row $on>
                        <Cell><CamIcon c="#2c6ca8" /></Cell>
                        <Cell>SPORT MED 1</Cell>
                        <Cell />
                        <Cell />
                      </Row>
                      <Row>
                        <Cell><CamIcon c="#1c8c84" /></Cell>
                        <Cell>TEST SPOT MED</Cell>
                        <Cell />
                        <Cell />
                      </Row>
                    </tbody>
                  </Grid>
                </Sheet>
                <Footer>
                  <FooterText>100%</FooterText>
                  <Progress value={100} max={100} aria-label="Loaded" />
                  <FooterText>2 of 2</FooterText>
                </Footer>
              </Child>
              <VGrip />
              <HGrip />
            </Frame>
          </Work>
          <StatusBar>
            <StatusText>ess F1 to call up the online help</StatusText>
            <StatusCell $w={150} $blue><WindowIcon />Work Window</StatusCell>
            <StatusCell $w={26} />
            <StatusCell $w={29}>NUM</StatusCell>
            <StatusCell $w={29} />
          </StatusBar>
          <RemoteBar>
            <StartButton $cut><FlagIcon />Start</StartButton>
            <Sep $m={7} />
            <Quick $left={0} $right={35}>
              <QuickButton aria-label="Show desktop"><DeskIcon /></QuickButton>
              <QuickButton aria-label="Internet Explorer"><IeIcon /></QuickButton>
              <QuickButton aria-label="Explorer"><YellowFolderIcon /></QuickButton>
              <QuickButton aria-label="Services"><GearsIcon /></QuickButton>
              <QuickButton aria-label="Notebook"><NotebookIcon /></QuickButton>
            </Quick>
            <Sep $m={4} />
            <Tasks>
              <Task $on $w={160}><MediaIcon />OpenMedia - OpenMe...</Task>
            </Tasks>
            <Sep $m={35} />
            <Tray $gap={3}>
              <NetIcon />
              <VmIcon />
              <Clock>12.58</Clock>
            </Tray>
          </RemoteBar>
        </Remote>
        <VScroll>
          <ScrollButton aria-label="Scroll up"><Arrow d="up" /></ScrollButton>
          <VThumb />
          <ScrollButton aria-label="Scroll down"><Arrow d="down" /></ScrollButton>
        </VScroll>
      </Desk>
      <HScroll>
        <ScrollButton aria-label="Scroll left"><Arrow d="left" /></ScrollButton>
        <HThumb />
        <ScrollButton aria-label="Scroll right"><Arrow d="right" /></ScrollButton>
      </HScroll>

      <LocalBar>
        <StartButton><FlagIcon />Start</StartButton>
        <Quick $left={8} $right={8}>
          <QuickButton aria-label="Internet Explorer"><IeIcon /></QuickButton>
          <QuickButton aria-label="Show desktop"><DeskIcon /></QuickButton>
          <QuickButton aria-label="Outlook"><OutlookIcon /></QuickButton>
        </Quick>
        <Tasks>
          {tasks.map(({ text, Icon }, i) => (
            <Task key={text} $on={i === 3}><Icon />{text}</Task>
          ))}
        </Tasks>
        <Lang>IT</Lang>
        <Sep />
        <Tray $gap={2}>
          <OfficeIcon />
          <OutlookIcon />
          <SoundIcon />
          <VncIcon />
          <NvIcon />
          <NetIcon />
          <SpeakerIcon />
          <UsbIcon />
          <PauseBallIcon />
          <Clock>12.51</Clock>
        </Tray>
      </LocalBar>
    </Screen>
  );
}
